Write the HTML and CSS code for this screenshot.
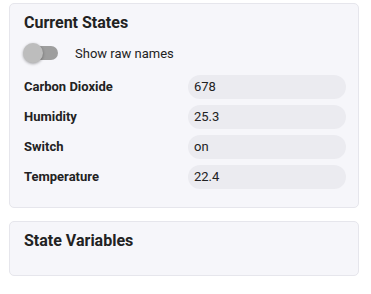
FILE: index.html
```html
<!DOCTYPE html>
<html>
    <head>
        <meta charset="utf-8">
        <title>Device States</title>
        <link rel="stylesheet" href="styles.css">
    </head>
    <body>
        <div class="card">
            <div class="card-title">Current States</div>
            <label class="toggle-row">
                <span class="switch"><span class="thumb"></span></span>
                <span class="toggle-label">Show raw names</span>
            </label>
            <div class="states">
                <div class="state-name">Carbon Dioxide</div>
                <div class="state-value">678</div>
                <div class="state-name">Humidity</div>
                <div class="state-value">25.3</div>
                <div class="state-name">Switch</div>
                <div class="state-value">on</div>
                <div class="state-name">Temperature</div>
                <div class="state-value">22.4</div>
            </div>
        </div>
        <div class="card card-small">
            <div class="card-title">State Variables</div>
        </div>
    </body>
</html>
```

FILE: styles.css
```css
html, body {
    height: 100%;
}
body {
    background-color: white;
    margin: 0;
    padding: 3px 12px 0 9px;
    font-family: Roboto, "Liberation Sans", Arial, sans-serif;
    color: #222;
    overflow: hidden;
}

.card {
    background-color: #f6f6fa;
    border: 1px solid #e6e6ec;
    border-radius: 5px;
    padding: 9px 12px 18px 14px;
    margin-bottom: 13px;
}
.card-small {
    padding-bottom: 24px;
}

.card-title {
    font-size: 16px;
    font-weight: bold;
    line-height: 20px;
    height: 20px;
}

.toggle-row {
    display: flex;
    align-items: center;
    height: 20px;
    margin-top: 10px;
}
.switch {
    position: relative;
    display: inline-block;
    width: 34px;
    height: 14px;
    border-radius: 7px;
    background-color: #9e9e9e;
}
.switch .thumb {
    position: absolute;
    left: -1px;
    top: -3px;
    width: 20px;
    height: 20px;
    border-radius: 50%;
    background-color: #bdbdbd;
    box-shadow: 0 1px 3px rgba(0, 0, 0, 0.35);
}
.toggle-label {
    font-size: 13px;
    margin-left: 17px;
}

.states {
    display: grid;
    grid-template-columns: 164px 1fr;
    row-gap: 6px;
    margin-top: 12px;
    font-size: 13px;
}
.state-name {
    font-weight: bold;
    line-height: 24px;
}
.state-value {
    background-color: #ebebf0;
    border-radius: 12px;
    height: 24px;
    line-height: 24px;
    padding-left: 6px;
}
```
